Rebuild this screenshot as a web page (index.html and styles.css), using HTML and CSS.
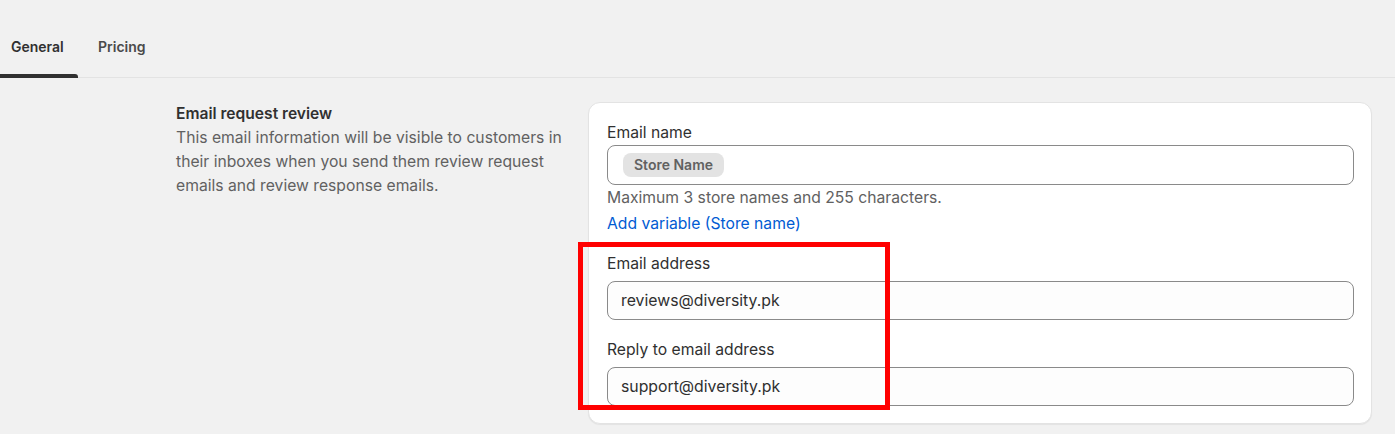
FILE: index.html
```html
<!DOCTYPE html>
<html>
<head>
<meta charset="utf-8">
<link rel="stylesheet" href="styles.css">
</head>
<body>
<nav class="tabs">
  <div class="tab active">General</div>
  <div class="tab">Pricing</div>
</nav>
<main class="layout">
  <section class="intro">
    <h2 class="intro-title">Email request review</h2>
    <p class="intro-text">This email information will be visible to customers in their inboxes when you send them review request emails and review response emails.</p>
  </section>
  <section class="card">
    <div class="field">
      <label class="label label-first">Email name</label>
      <div class="input input-chips"><span class="chip">Store Name</span></div>
      <div class="help">Maximum 3 store names and 255 characters.</div>
      <a class="link" href="#">Add variable (Store name)</a>
    </div>
    <div class="field field-gap">
      <label class="label">Email address</label>
      <div class="input input-text">reviews@diversity.pk</div>
    </div>
    <div class="field field-gap2">
      <label class="label">Reply to email address</label>
      <div class="input input-text">support@diversity.pk</div>
    </div>
    <div class="highlight"></div>
  </section>
</main>
</body>
</html>
```
FILE: styles.css
```css
* { box-sizing: border-box; }
html, body { margin: 0; padding: 0; }
body {
  background: #f1f1f1;
  font-family: Inter, "Noto Sans", sans-serif;
  color: #303030;
  width: 1395px;
  height: 434px;
  overflow: hidden;
}
.tabs {
  display: flex;
  height: 78px;
  border-bottom: 1px solid #e3e3e3;
  align-items: stretch;
}
.tab {
  font-size: 14px;
  font-weight: 600;
  color: #4a4a4a;
  padding: 39px 0 0 0;
  position: relative;
  line-height: 16px;
}
.tab:first-child { width: 78px; padding-left: 11px; color: #303030; }
.tab + .tab { padding-left: 20px; }
.tab.active::after {
  content: "";
  position: absolute;
  left: 0; right: 0; bottom: -1px;
  height: 4px;
  background: #303030;
  border-top-right-radius: 3px;
}
.layout {
  display: flex;
  gap: 18px;
  padding-left: 176px;
  padding-top: 24px;
}
.intro { width: 394px; }
.intro-title {
  margin: 0;
  font-size: 15.6px;
  font-weight: 600;
  line-height: 24px;
  color: #303030;
}
.intro-text {
  margin: 0;
  font-size: 15.7px;
  line-height: 24px;
  color: #616161;
}
.card {
  position: relative;
  width: 784px;
  height: 322px;
  background: #ffffff;
  border-radius: 12px;
  border: 1px solid #e3e3e3;
  box-shadow: 0 1px 1px rgba(0,0,0,0.06);
  padding: 19px 17px 0 18px;
}
.field { display: flex; flex-direction: column; }
.label {
  font-size: 15.7px;
  line-height: 22px;
  color: #303030;
  margin-bottom: 6px;
}
.label-first { margin-bottom: 1px; }
.input {
  height: 40px;
  border: 1px solid #8a8a8a;
  border-radius: 8px;
  display: flex;
  align-items: center;
  padding: 0 13px;
}
.input-chips { padding-left: 15px; }
.chip {
  background: #e3e3e3;
  border-radius: 8px;
  font-size: 14px;
  font-weight: 600;
  color: #616161;
  padding: 0 11px;
  height: 24px;
  line-height: 24px;
}
.input-text {
  height: 39px;
  background: #fdfdfd;
  font-size: 15.8px;
  color: #303030;
}
.help {
  font-size: 15.7px;
  line-height: 24px;
  color: #616161;
  margin-top: 1px;
}
.link {
  font-size: 15.7px;
  line-height: 24px;
  color: #005bd3;
  text-decoration: none;
  margin-top: 2px;
}
.field-gap { margin-top: 17px; }
.field-gap2 { margin-top: 19px; }
.highlight {
  position: absolute;
  left: -11px;
  top: 139px;
  width: 312px;
  height: 168px;
  border: 5px solid #ff0000;
}
```
